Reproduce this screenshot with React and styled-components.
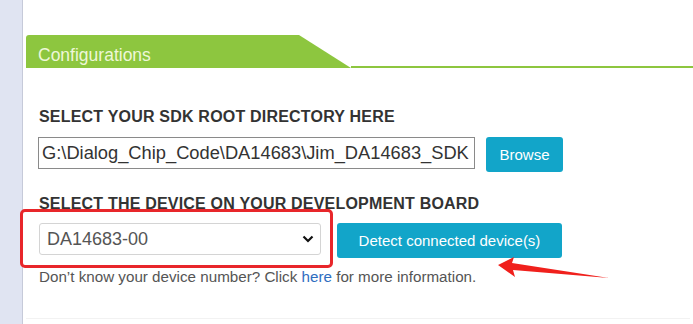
import React from 'react';
import styled, { createGlobalStyle } from 'styled-components';

const GlobalStyle = createGlobalStyle`
  html, body {
    margin: 0;
    padding: 0;
    background: #ffffff;
    font-family: "Liberation Sans", Arial, sans-serif;
  }
`;

const Page = styled.div`
  display: flex;
  flex-direction: row;
  width: 693px;
  height: 324px;
  overflow: hidden;
`;

const Sidebar = styled.div`
  width: 22px;
  flex: none;
  background: #e0e4f2;
  border-right: 1px solid #c6cad9;
`;

const Main = styled.div`
  flex: 1;
  display: flex;
  flex-direction: column;
  padding-top: 35px;
  padding-left: 3px;
`;

const Header = styled.div`
  display: flex;
  flex-direction: row;
  align-items: flex-end;
  height: 33px;
`;

const Tab = styled.div`
  width: 325px;
  height: 33px;
  flex: none;
  box-sizing: border-box;
  padding-left: 12px;
  padding-top: 7px;
  display: flex;
  align-items: center;
  background: #8dc63f;
  border-top-left-radius: 3px;
  clip-path: polygon(0 0, 273px 0, 325px 100%, 0 100%);
  color: #eef7d8;
  font-size: 17.5px;
`;

const Rule = styled.div`
  flex: 1;
  height: 2px;
  background: #8dc63f;
`;

const Panel = styled.div`
  display: flex;
  flex-direction: column;
  padding-left: 12px;
  height: 250px;
  margin-right: 3px;
  border-bottom: 1px solid #f2f2f2;
`;

const Heading = styled.div`
  font-size: 16px;
  line-height: 18px;
  font-weight: bold;
  letter-spacing: 0.2px;
  color: #333333;
  margin-top: ${(p) => p.$top}px;
  padding-left: 1px;
`;

const Row = styled.div`
  position: relative;
  display: flex;
  flex-direction: row;
  align-items: flex-start;
  gap: ${(p) => p.$gap}px;
  margin-top: ${(p) => p.$top}px;
`;

const PathInput = styled.div`
  width: 437px;
  height: 32px;
  box-sizing: border-box;
  border: 1px solid #8a8a8a;
  padding-left: 3px;
  display: flex;
  align-items: center;
  font-size: 18.3px;
  color: #333333;
  white-space: nowrap;
  overflow: hidden;
`;

const Button = styled.div`
  height: 35px;
  width: ${(p) => p.$width}px;
  box-sizing: border-box;
  display: flex;
  align-items: center;
  justify-content: center;
  background: #12a5c9;
  border-radius: 3px;
  color: #ffffff;
  font-size: 15px;
`;

const Select = styled.div`
  width: 282px;
  height: 32px;
  margin-left: 1px;
  box-sizing: border-box;
  border: 1px solid #d4d4d4;
  border-radius: 3px;
  padding: 0 6px 0 7px;
  display: flex;
  align-items: center;
  justify-content: space-between;
  font-size: 18px;
  color: #555555;
`;

const Highlight = styled.div`
  position: absolute;
  left: -18px;
  top: -14px;
  width: 313px;
  height: 59px;
  box-sizing: border-box;
  border: 3px solid #e8262a;
  border-radius: 5px;
`;

const Arrow = styled.svg`
  position: absolute;
  left: 459px;
  top: 33px;
`;

const Help = styled.div`
  margin-top: 10px;
  padding-left: 1px;
  font-size: 15.2px;
  line-height: 17px;
  color: #555555;
`;

const Link = styled.span`
  color: #2f6dbf;
`;

export default function App() {
  return (
    <Page>
      <GlobalStyle />
      <Sidebar />
      <Main>
        <Header>
          <Tab>Configurations</Tab>
          <Rule />
        </Header>
        <Panel>
          <Heading $top={40}>SELECT YOUR SDK ROOT DIRECTORY HERE</Heading>
          <Row $top={11} $gap={11}>
            <PathInput>G:\Dialog_Chip_Code\DA14683\Jim_DA14683_SDK</PathInput>
            <Button $width={77}>Browse</Button>
          </Row>
          <Heading $top={23}>SELECT THE DEVICE ON YOUR DEVELOPMENT BOARD</Heading>
          <Row $top={10} $gap={16}>
            <Select>
              <span>DA14683-00</span>
              <svg width="12" height="8" viewBox="0 0 12 8">
                <path d="M1.5 1.5l4.5 4.5 4.5-4.5" fill="none" stroke="#111" strokeWidth="2.2" />
              </svg>
            </Select>
            <Button $width={225}>Detect connected device(s)</Button>
            <Highlight />
            <Arrow width="114" height="26" viewBox="0 0 114 26">
              <polygon points="1,9 17,1 15,7 112,22 16,14 18,21" fill="#f0201c" />
            </Arrow>
          </Row>
          <Help>
            Don’t know your device number? Click <Link>here</Link> for more information.
          </Help>
        </Panel>
      </Main>
    </Page>
  );
}
